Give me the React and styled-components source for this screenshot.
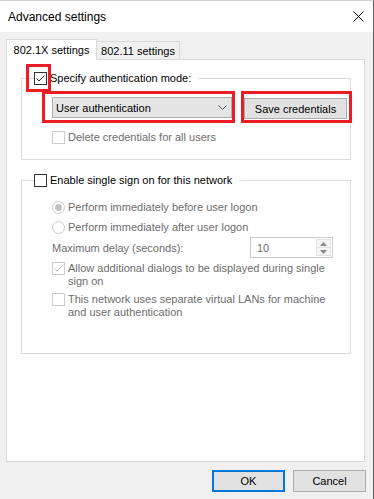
import React from 'react';
import styled, { createGlobalStyle } from 'styled-components';

const GlobalStyle = createGlobalStyle`
  html, body {
    margin: 0;
    padding: 0;
    background: #fff;
  }
  body {
    font-family: "Liberation Sans", Arial, sans-serif;
    font-size: 11px;
    color: #000;
  }
  * {
    box-sizing: border-box;
  }
`;

const Window = styled.div`
  position: relative;
  width: 374px;
  height: 499px;
  display: flex;
  flex-direction: column;
  background: #f0f0f0;
  border-top: 1px solid #d2d2d2;
  border-right: 1px solid #5f5f5f;
  overflow: hidden;
`;

const TitleBar = styled.div`
  height: 31px;
  flex: none;
  display: flex;
  align-items: center;
  justify-content: space-between;
  padding: 0 9px 0 8px;
  background: #fff;
`;

const Title = styled.span`
  font-size: 12px;
`;

const CloseIcon = styled.svg`
  width: 11px;
  height: 11px;
  display: block;
`;

const Body = styled.div`
  flex: 1;
  display: flex;
  flex-direction: column;
  padding: 7px 8px 0 6px;
`;

const TabRow = styled.div`
  height: 20px;
  flex: none;
  display: flex;
  align-items: flex-end;
`;

const Tab = styled.div`
  position: relative;
  z-index: ${(p) => (p.$active ? 1 : 0)};
  width: ${(p) => p.$width}px;
  height: ${(p) => (p.$active ? 21 : 18)}px;
  margin-left: ${(p) => (p.$first ? 0 : -1)}px;
  margin-bottom: ${(p) => (p.$active ? -1 : 0)}px;
  display: flex;
  align-items: center;
  justify-content: center;
  padding-bottom: ${(p) => (p.$active ? 1 : 0)}px;
  background: ${(p) => (p.$active ? '#fff' : '#f0f0f0')};
  border: 1px solid #d9d9d9;
  border-bottom: none;
  white-space: nowrap;
`;

const Panel = styled.div`
  flex: 1;
  background: #fff;
  border: 1px solid #d9d9d9;
  padding: 12px 0 0 14px;
`;

const Group = styled.fieldset`
  width: 330px;
  min-width: 0;
  margin: ${(p) => p.$top || 0}px 0 0 0;
  padding: 0;
  border: 1px solid #dcdcdc;
`;

const Legend = styled.legend`
  margin-left: 12px;
  padding: 0 7px 0 0;
  height: 13px;
  line-height: 13px;
  display: flex;
  align-items: center;
  gap: 3px;
`;

const GroupBody = styled.div`
  display: flex;
  flex-direction: column;
  padding: ${(p) => p.$pad};
`;

const ControlRow = styled.div`
  display: flex;
  align-items: flex-start;
  gap: 12px;
`;

const Combo = styled.div`
  width: 180px;
  height: 21px;
  display: flex;
  align-items: center;
  justify-content: space-between;
  padding: 0 4px 0 3px;
  background: #e5e5e5;
  border: 1px solid #adadad;
`;

const Chevron = styled.svg`
  width: 9px;
  height: 5px;
  display: block;
`;

const Button = styled.div`
  width: ${(p) => p.$width}px;
  height: ${(p) => p.$height}px;
  margin-top: ${(p) => p.$top || 0}px;
  display: flex;
  align-items: center;
  justify-content: center;
  background: #e1e1e1;
  border: ${(p) => (p.$default ? '2px solid #0078d7' : '1px solid #adadad')};
  white-space: nowrap;
`;

const Option = styled.div`
  display: flex;
  align-items: flex-start;
  gap: 3px;
  margin-top: ${(p) => p.$top || 0}px;
  color: ${(p) => (p.$disabled ? '#6d6d6d' : '#000')};
`;

const Label = styled.span`
  line-height: 13px;
  white-space: nowrap;
`;

const Box = styled.span`
  width: 13px;
  height: 13px;
  flex: none;
  display: flex;
  align-items: center;
  justify-content: center;
  background: #fff;
  border: 1px solid ${(p) => (p.$disabled ? '#cccccc' : '#333333')};
`;

const Radio = styled.span`
  width: 13px;
  height: 13px;
  flex: none;
  display: flex;
  align-items: center;
  justify-content: center;
  border-radius: 50%;
  background: #fff;
  border: 1px solid #cccccc;

  &::after {
    content: '';
    width: 7px;
    height: 7px;
    border-radius: 50%;
    background: ${(p) => (p.$checked ? '#c2c2c2' : 'transparent')};
  }
`;

const DelayRow = styled.div`
  display: grid;
  grid-template-columns: 198px 83px;
  align-items: center;
  margin-top: 3px;
  color: #6d6d6d;
`;

const Spinner = styled.div`
  width: 83px;
  height: 21px;
  display: flex;
  padding: 1px 1px 1px 0;
  background: #fff;
  border: 1px solid #cccccc;
`;

const SpinValue = styled.span`
  flex: 1;
  display: flex;
  align-items: center;
  padding-left: 6px;
  color: #6d6d6d;
`;

const SpinArrows = styled.div`
  width: 15px;
  display: flex;
  flex-direction: column;
  border: 1px solid #e3e3e3;
`;

const SpinHalf = styled.div`
  flex: 1;
  display: flex;
  align-items: center;
  justify-content: center;
  background: #f5f5f5;
  border-top: ${(p) => (p.$lower ? '1px solid #e3e3e3' : 'none')};
`;

const ButtonRow = styled.div`
  flex: none;
  display: flex;
  justify-content: flex-end;
  gap: 8px;
  padding: 8px 0 7px;
  margin-right: -1px;
`;

const Highlight = styled.div`
  position: absolute;
  left: ${(p) => p.$x}px;
  top: ${(p) => p.$y}px;
  width: ${(p) => p.$w}px;
  height: ${(p) => p.$h}px;
  border: 3px solid #ec1c24;
  pointer-events: none;
`;

function Check({ checked, disabled }) {
  return (
    <Box $disabled={disabled}>
      {checked && (
        <svg width="11" height="11" viewBox="0 0 11 11">
          <polyline
            points="1.5,5.5 4,8 9.5,2.5"
            fill="none"
            stroke={disabled ? '#bdbdbd' : '#333'}
            strokeWidth="1"
          />
        </svg>
      )}
    </Box>
  );
}

function Triangle({ down }) {
  return (
    <svg width="7" height="4" viewBox="0 0 7 4">
      <polygon points={down ? '0,0 7,0 3.5,4' : '0,4 7,4 3.5,0'} fill="#8a8a8a" />
    </svg>
  );
}

export default function App() {
  return (
    <>
      <GlobalStyle />
      <Window>
        <TitleBar>
          <Title>Advanced settings</Title>
          <CloseIcon viewBox="0 0 11 11">
            <path d="M0.5 0.5 L10.5 10.5 M10.5 0.5 L0.5 10.5" stroke="#000" strokeWidth="1" />
          </CloseIcon>
        </TitleBar>

        <Body>
          <TabRow>
            <Tab $active $first $width={91}>802.1X settings</Tab>
            <Tab $width={84}>802.11 settings</Tab>
          </TabRow>

          <Panel>
            <Group>
              <Legend>
                <Check checked />
                <span>Specify authentication mode:</span>
              </Legend>
              <GroupBody $pad="12px 0 15px 30px">
                <ControlRow>
                  <Combo>
                    <span>User authentication</span>
                    <Chevron viewBox="0 0 9 5">
                      <polyline points="0.5,0.5 4.5,4.5 8.5,0.5" fill="none" stroke="#555" strokeWidth="1" />
                    </Chevron>
                  </Combo>
                  <Button $width={103} $height={21} $top={1}>Save credentials</Button>
                </ControlRow>
                <Option $disabled $top={12}>
                  <Check disabled />
                  <Label>Delete credentials for all users</Label>
                </Option>
              </GroupBody>
            </Group>

            <Group $top={14}>
              <Legend>
                <Check />
                <span>Enable single sign on for this network</span>
              </Legend>
              <GroupBody $pad="14px 0 34px 30px">
                <Option $disabled>
                  <Radio $checked />
                  <Label>Perform immediately before user logon</Label>
                </Option>
                <Option $disabled $top={7}>
                  <Radio />
                  <Label>Perform immediately after user logon</Label>
                </Option>
                <DelayRow>
                  <span>Maximum delay (seconds):</span>
                  <Spinner>
                    <SpinValue>10</SpinValue>
                    <SpinArrows>
                      <SpinHalf><Triangle /></SpinHalf>
                      <SpinHalf $lower><Triangle down /></SpinHalf>
                    </SpinArrows>
                  </Spinner>
                </DelayRow>
                <Option $disabled $top={4}>
                  <Check checked disabled />
                  <Label>
                    Allow additional dialogs to be displayed during single
                    <br />
                    sign on
                  </Label>
                </Option>
                <Option $disabled $top={5}>
                  <Check disabled />
                  <Label>
                    This network uses separate virtual LANs for machine
                    <br />
                    and user authentication
                  </Label>
                </Option>
              </GroupBody>
            </Group>
          </Panel>

          <ButtonRow>
            <Button $default $width={73} $height={22}>OK</Button>
            <Button $width={73} $height={22}>Cancel</Button>
          </ButtonRow>
        </Body>

        <Highlight $x={26} $y={63} $w={25} $h={28} />
        <Highlight $x={42} $y={90} $w={193} $h={32} />
        <Highlight $x={241} $y={90} $w={111} $h={32} />
      </Window>
    </>
  );
}
